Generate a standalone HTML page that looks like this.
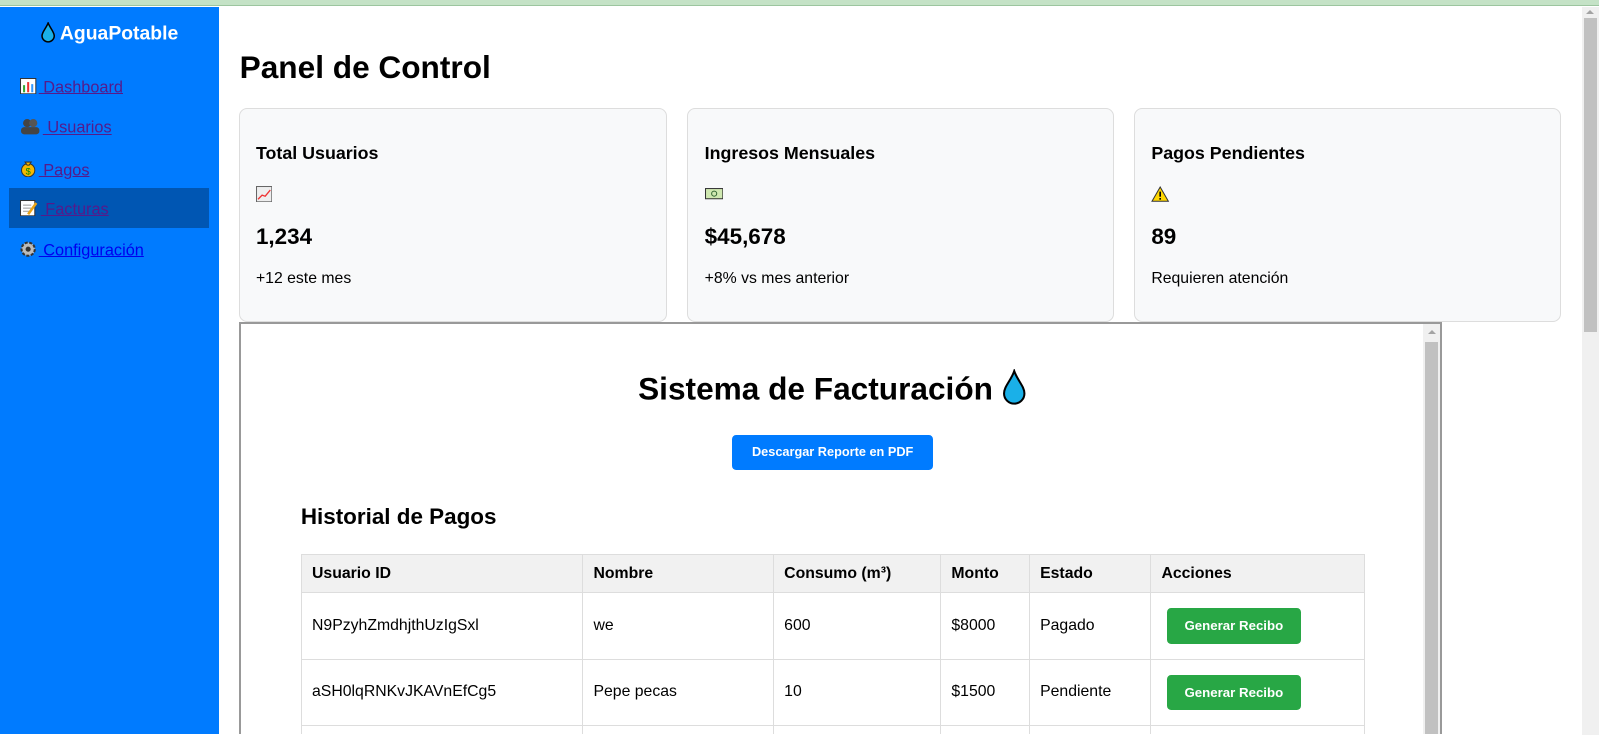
<!DOCTYPE html>
<html style="overflow:hidden;height:735px"><head><meta charset="utf-8"><style>
*{box-sizing:border-box;margin:0;padding:0}
html,body{width:1599px;height:735px;overflow:hidden}
body{background:#fff;font-family:"Liberation Sans",Arial,sans-serif;position:relative;color:#000}
.abs{position:absolute}
#w{position:absolute;left:0;top:0;width:1568px;height:720px;zoom:1.0198;overflow:hidden}
.top{left:0;top:0;width:1599px;height:6px;background:#c4e2c6;border-bottom:1px solid #9cc59f}
.side{left:0;top:7px;width:215px;height:713px;background:#007bff}
.logo{left:0;top:22px;width:215px;text-align:center;color:#fff;font-weight:bold;font-size:19px}
.nav{left:20px;font-size:16px;text-decoration:underline;color:#551a8b;white-space:nowrap}
.nav svg{vertical-align:-2px;margin-right:2px}
.active{left:9px;top:184px;width:196px;height:40px;background:#0056b3}
h1{position:absolute;left:235px;top:48px;font-size:31px;font-weight:bold}
.card{top:106px;height:210px;background:#f8f9fa;border:1px solid #ddd;border-radius:8px;padding:0 16px}
.card h3{position:absolute;top:33px;left:16px;font-size:17.5px}
.card .ic{position:absolute;top:75px;left:16px}
.card .v{position:absolute;top:113px;left:16px;font-size:22px;font-weight:bold}
.card .s{position:absolute;top:158px;left:16px;font-size:15.5px}
.frame{left:234px;top:316px;width:1180px;height:404px;border:2px solid #999;border-bottom:none;overflow:hidden;background:#fff}
.sb1{left:1582px;top:7px;width:17px;height:728px;background:#f0f0f0}
.th1{left:1584px;top:18px;width:13px;height:314px;background:#c1c1c1}
.sb2{left:1395px;top:318px;width:17px;height:402px;background:#f0f0f0}
.th2{left:1397px;top:335px;width:13px;height:385px;background:#c1c1c1}
.arr{width:0;height:0;border-left:4px solid transparent;border-right:4px solid transparent;border-bottom:4px solid #a3a3a3}
table{position:absolute;left:295px;top:543px;border-collapse:collapse;font-size:15.5px}
td,th{border:1px solid #ddd;padding:0 10px;text-align:left;height:65px}
th{background:#f1f1f1;height:38px;font-weight:bold}
.gb{display:inline-block;background:#28a745;color:#fff;font-size:13px;font-weight:bold;width:132px;height:35px;line-height:35px;text-align:center;border-radius:4px;margin-left:5px}
</style></head><body>
<div id="w">
<div class="abs top"></div>
<div class="abs side"></div>
<div class="abs active"></div>
<div class="abs logo"><svg width="14" height="20" viewBox="0 0 14 20" style="vertical-align:-3px"><path d="M7 1C5 6 1 10 1 13.5A6 6 0 0 0 13 13.5C13 10 9 6 7 1Z" fill="#1ab0e8" stroke="#000" stroke-width="1.5"/></svg> AguaPotable</div>
<div class="abs nav" style="top:76px"><svg width="16" height="16"><rect x=".5" y=".5" width="15" height="15" fill="#fff" stroke="#333"/><rect x="3" y="7" width="2" height="7" fill="#3a3"/><rect x="7" y="4" width="2" height="10" fill="#e33"/><rect x="11" y="6" width="2" height="8" fill="#39f"/></svg> Dashboard</div>
<div class="abs nav" style="top:116px"><svg width="20" height="16"><circle cx="7" cy="5" r="4" fill="#444"/><circle cx="13" cy="5" r="4" fill="#555"/><rect x="1" y="9" width="18" height="7" rx="3" fill="#444"/></svg> Usuarios</div>
<div class="abs nav" style="top:156px"><svg width="16" height="18"><circle cx="8" cy="11" r="6.5" fill="#f5b800" stroke="#333"/><path d="M5 3h6l-2 3H7z" fill="#f5b800" stroke="#333"/><text x="5.5" y="15" font-size="9" fill="#080">$</text></svg> Pagos</div>
<div class="abs nav" style="top:196px"><svg width="18" height="16"><rect x=".5" y=".5" width="14" height="15" fill="#fff" stroke="#333"/><path d="M3 5h8M3 8h8M3 11h6" stroke="#999"/><path d="M8 14L16 3" stroke="#e8a317" stroke-width="2.5"/></svg> Facturas</div>
<div class="abs nav" style="top:236px;color:#0000ee"><svg width="16" height="16"><circle cx="8" cy="8" r="6.5" fill="#bbb" stroke="#333" stroke-width="2" stroke-dasharray="3 1.5"/><circle cx="8" cy="8" r="2.5" fill="#333"/></svg> Configuración</div>

<h1>Panel de Control</h1>
<div class="abs card" style="left:234px;width:420px"><h3>Total Usuarios</h3><div class="ic"><svg width="16" height="16"><rect x=".5" y=".5" width="15" height="15" fill="#eee" stroke="#666"/><path d="M2 13L6 9 9 10 14 4" stroke="#e33" fill="none" stroke-width="1.3"/></svg></div><div class="v">1,234</div><div class="s">+12 este mes</div></div>
<div class="abs card" style="left:674px;width:418px"><h3>Ingresos Mensuales</h3><div class="ic"><svg width="18" height="14"><rect x=".5" y="2.5" width="17" height="10" fill="#cfe8b0" stroke="#333"/><circle cx="9" cy="7.5" r="2.5" fill="none" stroke="#363"/></svg></div><div class="v">$45,678</div><div class="s">+8% vs mes anterior</div></div>
<div class="abs card" style="left:1112px;width:419px"><h3>Pagos Pendientes</h3><div class="ic"><svg width="18" height="16"><path d="M9 1L17 15H1Z" fill="#ffd700" stroke="#333"/><rect x="8.2" y="5.5" width="1.6" height="5" fill="#000"/><rect x="8.2" y="11.8" width="1.6" height="1.6" fill="#000"/></svg></div><div class="v">89</div><div class="s">Requieren atención</div></div>

<div class="abs frame"></div>
<div class="abs" style="left:236px;top:362px;width:1160px;text-align:center;font-size:31px;font-weight:bold">Sistema de Facturación <svg width="24" height="36" viewBox="0 0 24 36" style="vertical-align:-6px"><path d="M12 2C9 11 2 17 2 24A10 10 0 0 0 22 24C22 17 15 11 12 2Z" fill="#1ab0e8" stroke="#000" stroke-width="2"/></svg></div>
<div class="abs" style="left:718px;top:427px;width:197px;height:34px;background:#007bff;border-radius:4px;color:#fff;font-size:12.5px;font-weight:bold;text-align:center;line-height:34px">Descargar Reporte en PDF</div>
<div class="abs" style="left:295px;top:494px;font-size:22px;font-weight:bold">Historial de Pagos</div>
<div class="abs" style="left:236px;top:318px;width:1159px;height:402px;overflow:hidden">
<table style="left:59px;top:225px">
<tr><th style="width:276px">Usuario ID</th><th style="width:187px">Nombre</th><th style="width:164px">Consumo (m³)</th><th style="width:87px">Monto</th><th style="width:119px">Estado</th><th style="width:210px">Acciones</th></tr>
<tr><td>N9PzyhZmdhjthUzIgSxl</td><td>we</td><td>600</td><td>$8000</td><td>Pagado</td><td><span class="gb">Generar Recibo</span></td></tr>
<tr><td>aSH0lqRNKvJKAVnEfCg5</td><td>Pepe pecas</td><td>10</td><td>$1500</td><td>Pendiente</td><td><span class="gb">Generar Recibo</span></td></tr>
<tr><td></td><td></td><td></td><td></td><td></td><td></td></tr>
</table>
</div>
<div class="abs sb2"></div><div class="abs th2"></div><div class="abs arr" style="left:1400px;top:324px"></div>
</div>
<div class="abs sb1"></div><div class="abs th1"></div><div class="abs arr" style="left:1586px;top:10px"></div>
</body></html>
